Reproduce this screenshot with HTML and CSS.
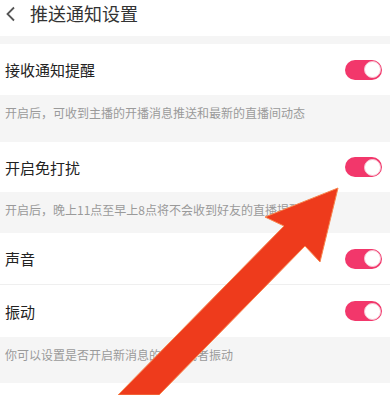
FILE: index.html
```html
<!DOCTYPE html>
<html lang="zh-CN">
<head>
	<meta charset="UTF-8">
	<title>推送通知设置</title>
	<link rel="stylesheet" href="styles.css">
</head>
<body>
	<div id="page">
		<div class="header">
			<svg class="back" width="12" height="16" viewBox="0 0 12 16"><path d="M9 1.5 L2.5 8 L9 14.5" fill="none" stroke="#555" stroke-width="1.8"/></svg>
			<span class="title">推送通知设置</span>
		</div>
		<div class="gap"></div>
		<div class="row r1">
			<span class="name">接收通知提醒</span>
			<span class="switch"></span>
		</div>
		<div class="desc d1">开启后，可收到主播的开播消息推送和最新的直播间动态</div>
		<div class="row r2">
			<span class="name">开启免打扰</span>
			<span class="switch"></span>
		</div>
		<div class="desc d2">开启后，晚上11点至早上8点将不会收到好友的直播提醒</div>
		<div class="row r3 line">
			<span class="name">声音</span>
			<span class="switch"></span>
		</div>
		<div class="row r4">
			<span class="name">振动</span>
			<span class="switch"></span>
		</div>
		<div class="desc d3">你可以设置是否开启新消息的声音或者振动</div>
	</div>
	<!-- 标注箭头 -->
	<svg class="arrow" width="390" height="395" viewBox="0 0 390 395">
		<polygon points="338,188 320,262 305,246 159,395 118,395 284,226 265,217" fill="#ee3b1c" stroke="#f7864f" stroke-width="1" stroke-linejoin="round"/>
	</svg>
</body>
</html>
```

FILE: styles.css
```css
*{margin: 0;padding: 0;}
body{
	background-color: #fff;
	font-family: "Noto Sans CJK SC", "Liberation Sans", sans-serif;
	width: 390px;
	height: 395px;
	overflow: hidden;
	position: relative;
}
#page .header{
	display: flex;
	align-items: flex-start;
	height: 36px;
	padding-top: 2px;
	box-sizing: border-box;
}
.header .back{
	margin: 4px 0 0 5px;
}
.header .title{
	margin-left: 13px;
	font-size: 18px;
	line-height: 22px;
	color: #333;
}
#page .gap{
	height: 8px;
	background-color: #f5f5f5;
}
#page .row{
	display: flex;
	align-items: center;
	justify-content: space-between;
	padding: 0 8px 0 5px;
	box-sizing: border-box;
}
.row .name{
	font-size: 15px;
	color: #222;
}
.row.r1{ height: 51px; }
.row.r2{ height: 50px; }
.row.r3{ height: 52px; }
.row.r4{ height: 52px; }
.row.line{
	border-bottom: 1px solid #efefef;
}
.switch{
	position: relative;
	width: 37px;
	height: 20px;
	border-radius: 10px;
	background-color: #f2376b;
}
.switch:after{
	content: "";
	position: absolute;
	right: 1.5px;
	top: 1.5px;
	width: 15px;
	height: 15px;
	border-radius: 50%;
	background-color: #fff;
	border: 1px solid #f6c6d4;
	box-sizing: content-box;
	width: 15px;
	height: 15px;
}
#page .desc{
	box-sizing: border-box;
	padding: 11px 0 0 5px;
	font-size: 12px;
	line-height: 14px;
	color: #9a9a9a;
	background-color: #f5f5f5;
	white-space: nowrap;
}
.desc.d1{ height: 47px; }
.desc.d2{ height: 41px; }
.desc.d3{ height: 46px; padding-top: 13px; }
.arrow{
	position: absolute;
	left: 0;
	top: 0;
}
```
